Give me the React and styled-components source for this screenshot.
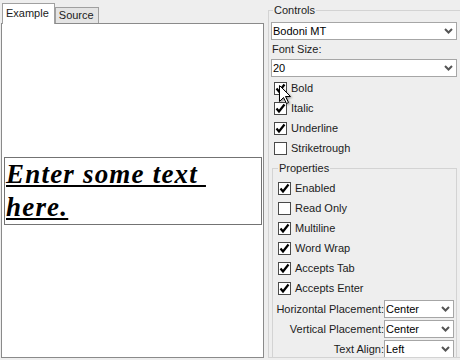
import React from "react";
import styled, { createGlobalStyle } from "styled-components";

const GlobalStyle = createGlobalStyle`
  html, body { margin: 0; padding: 0; }
  body {
    background: #eeeeee;
    font-family: "Liberation Sans", Arial, sans-serif;
    font-size: 11px;
    color: #1b1b1b;
    overflow: hidden;
  }
`;

const Window = styled.div`
  position: relative;
  display: flex;
  width: 460px;
  height: 360px;
  overflow: hidden;
`;

const LeftPane = styled.div`
  display: flex;
  flex-direction: column;
  width: 264px;
  flex-shrink: 0;
`;

const TabStrip = styled.div`
  display: flex;
  align-items: flex-end;
  height: 23px;
  padding-left: 2px;
`;

const Tab = styled.div`
  position: relative;
  z-index: ${(p) => (p.$active ? 1 : 0)};
  box-sizing: border-box;
  height: ${(p) => (p.$active ? "21px" : "16px")};
  margin-bottom: ${(p) => (p.$active ? "-1px" : "0")};
  padding: ${(p) => (p.$active ? "3px 5px 0 3px" : "1px 4px 0 3px")};
  line-height: 13px;
  background: ${(p) => (p.$active ? "#ffffff" : "#e4e4e4")};
  border: 1px solid #a0a0a0;
  border-bottom: none;
`;

const TabPanel = styled.div`
  box-sizing: border-box;
  display: flex;
  align-items: center;
  margin-left: 1px;
  width: 263px;
  height: 335px;
  padding: 0 1px 0 2px;
  background: #ffffff;
  border: 1px solid #8a8a8a;
`;

const TextBox = styled.div`
  box-sizing: border-box;
  width: 100%;
  height: 68px;
  padding: 0 1px;
  border: 1px solid #737373;
`;

const SampleText = styled.div`
  max-width: 235px;
  font-family: "Liberation Serif", "Times New Roman", serif;
  font-size: 27px;
  font-weight: bold;
  font-style: italic;
  letter-spacing: 1.2px;
  line-height: 33px;
  color: #000;
  text-decoration: underline;
  white-space: pre-wrap;
`;

const RightPane = styled.div`
  padding: 4px 0 0 4px;
`;

const Group = styled.fieldset`
  box-sizing: border-box;
  min-width: 0;
  margin: ${(p) => (p.$nested ? "4px 0 0 1px" : "0")};
  width: ${(p) => (p.$nested ? "185px" : "194px")};
  height: ${(p) => (p.$nested ? "auto" : "354px")};
  padding: ${(p) => (p.$nested ? "3px 2px 6px 5px" : "5px 4px 0 2px")};
  border: 1px solid #d3d3d3;
  overflow: ${(p) => (p.$nested ? "visible" : "hidden")};
`;

const Legend = styled.legend`
  padding: 0 1px;
  margin-left: ${(p) => p.$offset || 0}px;
  line-height: 13px;
  color: #222;
`;

const FieldLabel = styled.div`
  margin: 3px 0 3px 1px;
  line-height: 13px;
`;

const SelectBox = styled.div`
  box-sizing: border-box;
  display: flex;
  align-items: center;
  justify-content: space-between;
  width: ${(p) => (p.$small ? "70px" : "186px")};
  height: 18px;
  padding: 0 3px 0 1px;
  background: #ffffff;
  border: 1px solid #a6a6a6;
  line-height: 16px;
  color: #000;
`;

const CheckList = styled.div`
  margin: ${(p) => (p.$top ? "1px 0 0 3px" : "0")};
`;

const CheckRow = styled.label`
  display: flex;
  align-items: center;
  gap: 4px;
  height: 20px;
`;

const Box = styled.span`
  box-sizing: border-box;
  display: flex;
  align-items: center;
  justify-content: center;
  width: 13px;
  height: 13px;
  background: #ffffff;
  border: 1px solid #4a4a4a;
`;

const PlacementGrid = styled.div`
  display: grid;
  grid-template-columns: minmax(0, 1fr) 70px;
  row-gap: 2px;
  align-items: center;
  margin-top: 2px;
`;

const PlacementLabel = styled.span`
  display: flex;
  justify-content: flex-end;
  min-width: 0;
  white-space: nowrap;
`;

const Pointer = styled.svg`
  position: absolute;
  left: 279px;
  top: 85px;
  z-index: 5;
  filter: drop-shadow(1px 1px 1px rgba(0, 0, 0, 0.4));
`;

function Chevron() {
  return (
    <svg width="9" height="6" viewBox="0 0 9 6">
      <polyline points="1,1 4.5,4.5 8,1" fill="none" stroke="#555" strokeWidth="2" />
    </svg>
  );
}

function Select({ value, small }) {
  return (
    <SelectBox $small={small}>
      <span>{value}</span>
      <Chevron />
    </SelectBox>
  );
}

function Check({ label, checked }) {
  return (
    <CheckRow>
      <Box>
        {checked && (
          <svg width="11" height="11" viewBox="0 0 11 11">
            <polyline points="1.5,5.5 4,8.5 9.5,1.5" fill="none" stroke="#000" strokeWidth="2.2" />
          </svg>
        )}
      </Box>
      <span>{label}</span>
    </CheckRow>
  );
}

const fontChecks = [
  { label: "Bold", checked: true },
  { label: "Italic", checked: true },
  { label: "Underline", checked: true },
  { label: "Striketrough", checked: false },
];

const propChecks = [
  { label: "Enabled", checked: true },
  { label: "Read Only", checked: false },
  { label: "Multiline", checked: true },
  { label: "Word Wrap", checked: true },
  { label: "Accepts Tab", checked: true },
  { label: "Accepts Enter", checked: true },
];

const placements = [
  { label: "Horizontal Placement:", value: "Center" },
  { label: "Vertical Placement:", value: "Center" },
  { label: "Text Align:", value: "Left" },
];

export default function App() {
  return (
    <>
      <GlobalStyle />
      <Window>
        <LeftPane>
          <TabStrip>
            <Tab $active>Example</Tab>
            <Tab>Source</Tab>
          </TabStrip>
          <TabPanel>
            <TextBox>
              <SampleText>{"Enter some text here."}</SampleText>
            </TextBox>
          </TabPanel>
        </LeftPane>

        <RightPane>
          <Group>
            <Legend $offset={2}>Controls</Legend>
            <Select value="Bodoni MT" />
            <FieldLabel>Font Size:</FieldLabel>
            <Select value="20" />
            <CheckList $top>
              {fontChecks.map((c) => (
                <Check key={c.label} {...c} />
              ))}
            </CheckList>

            <Group $nested>
              <Legend>Properties</Legend>
              <CheckList>
                {propChecks.map((c) => (
                  <Check key={c.label} {...c} />
                ))}
              </CheckList>
              <PlacementGrid>
                {placements.map((p) => (
                  <React.Fragment key={p.label}>
                    <PlacementLabel>{p.label}</PlacementLabel>
                    <Select value={p.value} small />
                  </React.Fragment>
                ))}
              </PlacementGrid>
            </Group>
          </Group>
        </RightPane>

        <Pointer width="13" height="20" viewBox="0 0 13 20">
          <path
            d="M0.5 0.5 L0.5 16.5 L4.5 12.5 L7.5 18.5 L9.5 17.5 L6.5 11.5 L11.5 11.5 Z"
            fill="#fff"
            stroke="#000"
            strokeWidth="1"
          />
        </Pointer>
      </Window>
    </>
  );
}
